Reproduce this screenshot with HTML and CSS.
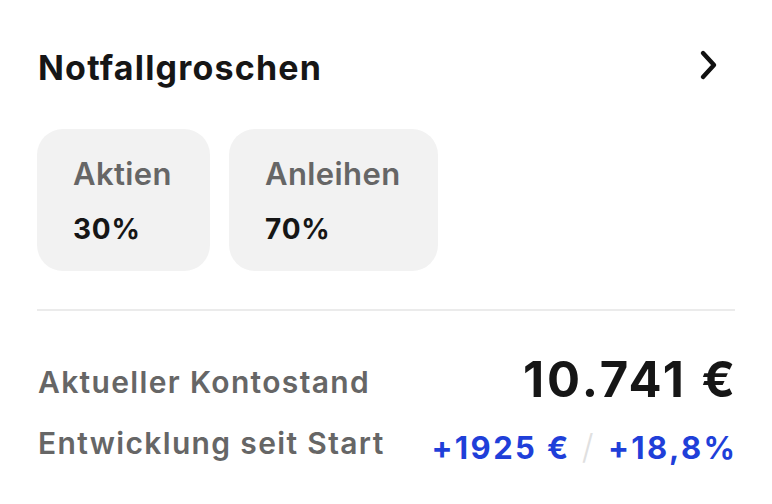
FILE: index.html
```html
<!DOCTYPE html>
<html lang="de">
<head>
<meta charset="utf-8">
<link rel="stylesheet" href="styles.css">
</head>
<body>
<div class="card">
  <div class="header">
    <h1 class="title">Notfallgroschen</h1>
    <svg class="chev" width="24" height="32" viewBox="0 0 24 32"><path d="M6 4 L17 16 L6 28" fill="none" stroke="#111" stroke-width="4.4" stroke-linecap="round" stroke-linejoin="round"/></svg>
  </div>
  <div class="chips">
    <div class="chip chip-a"><div class="chip-label">Aktien</div><div class="chip-value">30%</div></div>
    <div class="chip chip-b"><div class="chip-label">Anleihen</div><div class="chip-value">70%</div></div>
  </div>
  <div class="divider"></div>
  <div class="row row-balance">
    <span class="label">Aktueller Kontostand</span>
    <span class="balance">10.741 €</span>
  </div>
  <div class="row row-dev">
    <span class="label">Entwicklung seit Start</span>
    <span class="dev"><span class="blue">+1925 €</span><span class="slash">/</span><span class="blue last">+18,8%</span></span>
  </div>
</div>
</body>
</html>
```
FILE: styles.css
```css
html, body { margin: 0; padding: 0; background: #fff; }
body { font-family: "Inter", "Open Sans", sans-serif; color: #161616; }
.card { padding: 48px 37px 0 37px; }
.header { display: flex; justify-content: space-between; align-items: center; height: 40px; }
.title { margin: 0 0 0 1px; font-size: 34px; line-height: 40px; font-weight: 700; letter-spacing: 1.2px; }
.chev { margin-right: 14px; margin-top: -6px; }
.chips { display: flex; gap: 19px; margin-top: 41px; }
.chip { background: #f2f2f2; border-radius: 26px; height: 142px; box-sizing: border-box; padding: 26px 36px 0 36px; }
.chip-a { width: 173px; }
.chip-b { width: 209px; }
.chip-label { font-size: 31px; line-height: 38px; font-weight: 600; color: #666; letter-spacing: 0.4px; }
.chip-value { font-size: 28px; line-height: 34px; font-weight: 700; color: #161616; margin-top: 19px; letter-spacing: 0.8px; }
.divider { height: 2px; background: #ebebeb; margin-top: 38px; }
.row { display: flex; justify-content: space-between; align-items: flex-start; }
.row-balance { margin-top: 41px; }
.row-dev { margin-top: 17px; }
.label { font-size: 30px; line-height: 36px; font-weight: 600; color: #666; margin-left: 1px; letter-spacing: 1.35px; }
.row-balance .label { margin-top: 12px; }
.balance { font-size: 49px; line-height: 56px; font-weight: 700; color: #161616; letter-spacing: 3px; margin-right: -3px; }
.dev { font-size: 31px; line-height: 34px; font-weight: 700; margin-top: 5px; letter-spacing: 2.4px; margin-right: -2.4px; }
.blue { color: #1f3fd9; }
.slash { color: #e0e0e0; margin: 0 12px 0 11px; font-weight: 300; font-size: 34px; }
```
